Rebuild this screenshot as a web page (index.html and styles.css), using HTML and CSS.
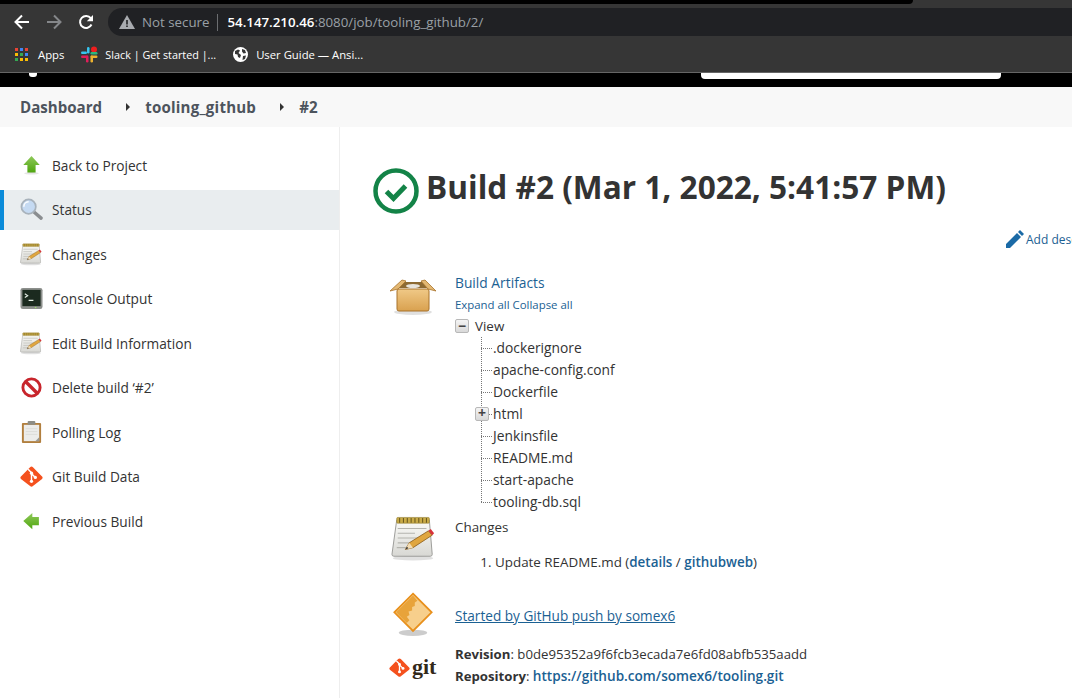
FILE: index.html
```html
<!DOCTYPE html>
<html lang="en">
<head>
    <meta charset="UTF-8">
    <meta name="viewport" content="width=device-width, initial-scale=1.0">
    <title>tooling_github #2 [Jenkins]</title>
    <link rel="stylesheet" href="styles.css">
</head>
<body>
    <svg class="sprites" width="0" height="0" aria-hidden="true">
        <defs>
            <linearGradient id="paper" x1="0" y1="0" x2="0" y2="1">
                <stop offset="0" stop-color="#fbfbf8"/>
                <stop offset="1" stop-color="#d8d8d4"/>
            </linearGradient>
            <linearGradient id="boxFront" x1="0" y1="0" x2="0" y2="1">
                <stop offset="0" stop-color="#f0c987"/>
                <stop offset="1" stop-color="#d9a14f"/>
            </linearGradient>
            <linearGradient id="greenArrow" x1="0" y1="0" x2="0" y2="1">
                <stop offset="0" stop-color="#8fc95a"/>
                <stop offset="1" stop-color="#4fa60f"/>
            </linearGradient>
            <symbol id="notepad" viewBox="0 0 48 48">
                <ellipse cx="23" cy="44" rx="21" ry="2.5" fill="#000" opacity=".12"/>
                <path d="M6 4h34l3 36q0 2-2 2H3q-2 0-2-2z" fill="url(#paper)" stroke="#9a9a96"/>
                <rect x="6" y="1.5" width="34" height="6" rx="1" fill="#c9ab47" stroke="#8f7a2e" stroke-width=".6"/>
                <path d="M9 2v5M13 2v5M17 2v5M21 2v5M25 2v5M29 2v5M33 2v5M37 2v5" stroke="#6b5a1e" stroke-width="1.1"/>
                <path d="M7 13h30M7 18h18M7 23h30M7 28h22M6 33h14" stroke="#b4b4ae" stroke-width="1.2"/>
                <path d="M15 35l4-7L39 15.500l4 4.500L23 33z" fill="#e0a63f" stroke="#85591a" stroke-width=".8"/>
                <path d="M39 15.500l4 4.500 2-2-3.500-4.500z" fill="#d8323a"/>
                <path d="M15 35l4-7 4 5z" fill="#f2dcb4"/>
                <path d="M15 35l1.600-3 1.600 1.700z" fill="#333"/>
            </symbol>
            <symbol id="gitMark" viewBox="0 0 24 24">
                <path d="M1 12L10.500 2.300q1.500-1.300 3 0l9.500 9.700q1.200 1.300 0 2.500l-9.500 7.500q-1.500 1.300-3 0L1 14.500q-1.200-1.300 0-2.500z" fill="#f4511e"/>
                <path d="M8.500 4.500l3.500 3.500M12 8v9M12 9l4 4" stroke="#fff" stroke-width="1.500" fill="none"/>
                <circle cx="12" cy="8.500" r="1.700" fill="#fff"/>
                <circle cx="12" cy="17" r="1.700" fill="#fff"/>
                <circle cx="16" cy="13" r="1.700" fill="#fff"/>
            </symbol>
        </defs>
    </svg>

    <div class="browser">
        <div class="tab-strip"><div class="tab-strip-dark"></div></div>
        <div class="toolbar">
            <svg class="nav-icon" width="16" height="16" viewBox="0 0 16 16"><path d="M15 8H2M8 1.500L1.500 8 8 14.500" fill="none" stroke="#fff" stroke-width="2"/></svg>
            <svg class="nav-icon" width="16" height="16" viewBox="0 0 16 16"><path d="M1 8h13M8 1.500L14.500 8 8 14.500" fill="none" stroke="#85878a" stroke-width="2"/></svg>
            <svg class="nav-icon" width="16" height="16" viewBox="0 0 16 16"><path d="M13.500 10.500A6 6 0 1 1 12.800 4.200" fill="none" stroke="#fff" stroke-width="2"/><path d="M15 1v6.200H8.800z" fill="#fff"/></svg>
            <div class="omnibox">
                <svg width="16" height="14" viewBox="0 0 16 14"><path d="M8 0l8 14H0z" fill="#a8abaf"/><path d="M7.200 5h1.600v4.500H7.200zM7.200 10.500h1.600V12H7.200z" fill="#202124"/></svg>
                <span class="not-secure">Not secure</span>
                <span class="url"><b>54.147.210.46</b>:8080/job/tooling_github/2/</span>
            </div>
        </div>
        <div class="bookmarks">
            <span class="bookmark bookmark-apps">
                <svg width="13" height="13" viewBox="0 0 13 13">
                    <path fill="#ea4335" d="M0 0h3v3H0z"/><path fill="#4285f4" d="M5 0h3v3H5z"/><path fill="#ea4335" d="M10 0h3v3h-3z"/>
                    <path fill="#fbbc05" d="M0 5h3v3H0z"/><path fill="#34a853" d="M5 5h3v3H5z"/><path fill="#4285f4" d="M10 5h3v3h-3z"/>
                    <path fill="#34a853" d="M0 10h3v3H0z"/><path fill="#fbbc05" d="M5 10h3v3H5z"/><path fill="#fbbc05" d="M10 10h3v3h-3z"/>
                </svg>
                Apps
            </span>
            <span class="bookmark bookmark-slack">
                <svg width="17" height="17" viewBox="0 0 17 17">
                    <rect x="6" y="1" width="2.500" height="6.500" rx="1.200" fill="#36c5f0"/>
                    <rect x="0" y="5.500" width="6" height="2.500" rx="1.200" fill="#36c5f0"/>
                    <circle cx="13" cy="3.500" r="3" fill="#f01e1e"/>
                    <rect x="9.500" y="6" width="7" height="2.500" rx="1.200" fill="#2eb67d"/>
                    <rect x="9.500" y="9.500" width="7" height="2.500" rx="1.200" fill="#ecb22e"/>
                    <rect x="9.500" y="9.500" width="2.500" height="7" rx="1.200" fill="#ecb22e"/>
                    <rect x="0" y="9.500" width="7" height="2.500" rx="1.200" fill="#e01e5a"/>
                    <rect x="5" y="9.500" width="2.500" height="7" rx="1.200" fill="#e01e5a"/>
                </svg>
                Slack | Get started |...
            </span>
            <span class="bookmark">
                <svg width="15" height="15" viewBox="0 0 15 15"><circle cx="7.500" cy="7.500" r="7.500" fill="#fff"/><path d="M2 4l3-1.500 2 1-1.500 2.500 2.500 2-1 3-2-1-.5-2.500L2 7zM9 2l3 1 1 3-2.500.5L9 4.500zM10 9l3-.5-1 3.500-2.500 1z" fill="#363636"/></svg>
                User Guide — Ansi...
            </span>
        </div>
    </div>

    <header class="top-bar">
        <span class="logo-stub"></span>
        <span class="search-box"></span>
    </header>

    <nav class="breadcrumbs">
        <a href="#">Dashboard</a>
        <span class="crumb-arrow"></span>
        <a class="crumb-job" href="#">tooling_github</a>
        <span class="crumb-arrow"></span>
        <a href="#">#2</a>
    </nav>

    <div class="page">
        <aside class="side-panel">
            <a class="task" href="#">
                <svg class="task-icon" viewBox="-2 -1 28 27"><path d="M12 1L22 12h-5v9H7v-9H2z" fill="url(#greenArrow)"/><ellipse cx="12" cy="22" rx="9" ry="1.500" fill="#000" opacity=".1"/></svg>
                Back to Project
            </a>
            <a class="task active" href="#">
                <svg class="task-icon" viewBox="0 0 24 24"><path d="M14 14l8 7" stroke="#8a8d90" stroke-width="3.500" stroke-linecap="round"/><circle cx="9" cy="9" r="7.500" fill="#c5daf2" stroke="#a8b2bb" stroke-width="1.800"/><path d="M4 9a5 5 0 0 1 5-5" stroke="#fff" stroke-width="1.500" fill="none"/></svg>
                Status
            </a>
            <a class="task" href="#"><svg class="task-icon"><use href="#notepad"/></svg>Changes</a>
            <a class="task" href="#">
                <svg class="task-icon" viewBox="0 0 24 24"><rect x=".5" y="1" width="23" height="22" rx="2.500" fill="#8c8f8c"/><rect x="2.500" y="3" width="19" height="17" fill="#1b2a1f"/><path d="M5 7l3 2-3 2M9 14h5" stroke="#e6efe6" stroke-width="1.200" fill="none"/><rect x="15.500" y="20.800" width="1.500" height="1.200" fill="#9fe06a"/></svg>
                Console Output
            </a>
            <a class="task" href="#"><svg class="task-icon"><use href="#notepad"/></svg>Edit Build Information</a>
            <a class="task" href="#">
                <svg class="task-icon" viewBox="0 0 24 24"><circle cx="12" cy="12" r="9" fill="#fff" stroke="#c8252c" stroke-width="3"/><path d="M6 6l12 12" stroke="#c8252c" stroke-width="3.500"/></svg>
                Delete build ‘#2’
            </a>
            <a class="task" href="#">
                <svg class="task-icon" viewBox="0 0 24 24"><rect x="2" y="2" width="20" height="21" rx="1" fill="#b17f3e"/><rect x="4" y="4" width="16" height="17" fill="#ececea"/><rect x="8" y="0" width="8" height="4" rx="1" fill="#8d8d86"/><path d="M6 8h12M6 11h12M6 14h12" stroke="#dcdcd8"/><path d="M20 17v4h-4z" fill="#9a9a95"/></svg>
                Polling Log
            </a>
            <a class="task" href="#"><svg class="task-icon"><use href="#gitMark"/></svg>Git Build Data</a>
            <a class="task" href="#">
                <svg class="task-icon" viewBox="-2 -1 28 27"><path d="M2 12L13 2v5h8v10h-8v5z" fill="url(#greenArrow)"/></svg>
                Previous Build
            </a>
        </aside>

        <main class="main-panel">
            <h1 class="build-title">
                <svg class="build-status" viewBox="0 0 46 46"><circle cx="23" cy="23" r="20.500" fill="none" stroke="#138347" stroke-width="4.500"/><path d="M13.500 23.500l7 7 12-12.500" fill="none" stroke="#138347" stroke-width="5"/></svg>
                <span class="build-name">Build #2 (Mar 1, 2022, 5:41:57 PM)</span>
            </h1>

            <a class="add-description" href="#">
                <svg width="18" height="18" viewBox="0 0 18 18"><path d="M0 18v-4L11 3l4 4L4 18zM12 2l2-2 4 4-2 2z" fill="#1a6aa6"/></svg>
                Add description
            </a>

            <section class="build-row artifacts-row">
                <svg class="row-icon box-icon" viewBox="0 0 48 36">
                    <ellipse cx="24" cy="33" rx="19" ry="3" fill="#000" opacity=".12"/>
                    <path d="M9 9l6-6h18l6 6z" fill="#8d6a33"/>
                    <ellipse cx="24" cy="7" rx="7" ry="2" fill="#e8e4dc"/>
                    <path d="M1 12L13 1l4 1-8 8zM47 12L36 1l-4 1 7 8z" fill="#e3b873" stroke="#a8722a" stroke-width=".8"/>
                    <rect x="8" y="10" width="32" height="22" rx="2" fill="url(#boxFront)" stroke="#a8722a"/>
                </svg>
                <div class="row-body">
                    <a class="artifacts-title" href="#">Build Artifacts</a>
                    <div class="artifacts-controls"><a href="#">Expand all</a> <a href="#">Collapse all</a></div>
                    <div class="tree-root"><span class="tree-toggle">&minus;</span><span class="tree-root-label">View</span></div>
                    <ul class="tree">
                        <li><a href="#">.dockerignore</a></li>
                        <li><a href="#">apache-config.conf</a></li>
                        <li><a href="#">Dockerfile</a></li>
                        <li class="tree-folder"><span class="tree-toggle">+</span><span>html</span></li>
                        <li><a href="#">Jenkinsfile</a></li>
                        <li><a href="#">README.md</a></li>
                        <li><a href="#">start-apache</a></li>
                        <li><a href="#">tooling-db.sql</a></li>
                    </ul>
                </div>
            </section>

            <section class="build-row changes-row">
                <svg class="row-icon notepad-icon"><use href="#notepad"/></svg>
                <div class="row-body">
                    <div>Changes</div>
                    <ol class="change-list">
                        <li>Update README.md (<a href="#">details</a> / <a href="#">githubweb</a>)</li>
                    </ol>
                </div>
            </section>

            <section class="build-row cause-row">
                <svg class="row-icon" viewBox="-3 -2 54 54">
                    <ellipse cx="24" cy="45" rx="16" ry="3.500" fill="#000" opacity=".2"/>
                    <path d="M24 1L45 22 24 43 3 22z" fill="#f7cf8c" stroke="#e8901c" stroke-width="2"/>
                    <path d="M24 3L5 22l12 12 3-3-3-4 3-2-1-4 4-1 0-4 3-1 0-4 3-2z" fill="#e8a33a"/>
                </svg>
                <div class="row-body"><a class="cause-link" href="#">Started by GitHub push by somex6</a></div>
            </section>

            <section class="build-row git-row">
                <div class="git-logo">
                    <svg width="21" height="21"><use href="#gitMark"/></svg>
                    <span class="git-word">git</span>
                </div>
                <div class="row-body">
                    <div class="git-line"><b>Revision</b>: b0de95352a9f6fcb3ecada7e6fd08abfb535aadd</div>
                    <div class="git-line"><b>Repository</b>: <a href="#">https://github.com/somex6/tooling.git</a></div>
                </div>
            </section>
        </main>
    </div>
</body>
</html>
```

FILE: styles.css
```css
* {
    margin: 0;
    padding: 0;
    box-sizing: border-box;
}

html, body {
    height: 698px;
    overflow: hidden;
}

body {
    font-family: 'Open Sans', 'Noto Sans', sans-serif;
    font-size: 13.4px;
    color: #333;
    background: #fff;
}

a {
    color: #1b6193;
    text-decoration: none;
}

.sprites {
    display: block;
    height: 0;
}

/* browser chrome */
.browser {
    background: #363636;
    border-bottom: 1px solid #666;
    height: 73px;
}

.tab-strip {
    height: 8px;
}

.tab-strip-dark {
    width: 913px;
    height: 4px;
    background: #000;
    border-bottom-right-radius: 4px;
}

.toolbar {
    display: flex;
    align-items: center;
    height: 28px;
    padding-left: 14px;
}

.nav-icon {
    margin-right: 16px;
}

.omnibox {
    flex: 1;
    display: flex;
    align-items: center;
    height: 28px;
    margin-left: -2px;
    padding-left: 11px;
    background: #202124;
    border-radius: 14px 0 0 14px;
    font-size: 13.3px;
}

.not-secure {
    margin-left: 7px;
    padding-right: 8px;
    border-right: 1px solid #6b6d70;
    line-height: 17px;
    color: #9aa0a6;
}

.url {
    margin-left: 9px;
    color: #9aa0a6;
}

.url b {
    font-weight: 600;
    color: #fff;
}

.bookmarks {
    display: flex;
    align-items: center;
    gap: 17px;
    height: 36px;
    padding-left: 15px;
    font-size: 11.3px;
    color: #fff;
}

.bookmark {
    display: flex;
    align-items: center;
    gap: 8px;
}

.bookmark-apps {
    gap: 10px;
}

.bookmark-slack {
    gap: 7px;
    font-size: 10.8px;
}

/* jenkins header */
.top-bar {
    display: flex;
    justify-content: space-between;
    align-items: flex-start;
    height: 14px;
    padding: 0 71px 0 29px;
    background: #000;
}

.logo-stub {
    width: 8px;
    height: 4px;
    background: #fff;
    border-radius: 0 0 3px 3px;
}

.search-box {
    width: 300px;
    height: 6px;
    background: #fff;
    border-radius: 0 0 4px 4px;
}

.breadcrumbs {
    display: flex;
    align-items: center;
    height: 40px;
    padding-left: 20px;
    background: #f8f8f8;
    font-size: 15.1px;
    font-weight: 700;
}

.breadcrumbs a {
    color: #4d545d;
}

.breadcrumbs .crumb-job {
    letter-spacing: .2px;
}

.crumb-arrow {
    width: 0;
    height: 0;
    margin: 0 15px 0 24px;
    border-left: 4px solid #333;
    border-top: 4px solid transparent;
    border-bottom: 4px solid transparent;
}

/* page layout */
.page {
    display: flex;
    height: 571px;
}

.side-panel {
    flex: 0 0 340px;
    padding-top: 18.3px;
    border-right: 1px solid #eee;
}

.task {
    display: flex;
    align-items: center;
    gap: 9px;
    height: 40px;
    margin-bottom: 4.5px;
    padding-left: 20px;
    font-size: 13.7px;
    color: #333;
}

.task.active {
    padding-left: 16px;
    background: #e9edef;
    border-left: 4px solid #0b8bd9;
}

.task-icon {
    flex: 0 0 23px;
    width: 23px;
    height: 23px;
}

.main-panel {
    flex: 1;
    min-width: 0;
    overflow: hidden;
    padding: 41px 0 0 33px;
}

.build-title {
    display: flex;
    align-items: center;
    gap: 8px;
    height: 46px;
    font-size: 31.6px;
    font-weight: 700;
    white-space: nowrap;
}

.build-name {
    margin-bottom: 10px;
    margin-left: -1px;
}

.build-status {
    flex: 0 0 46px;
    width: 46px;
    height: 46px;
}

.add-description {
    display: flex;
    align-items: center;
    gap: 2px;
    height: 18px;
    margin: 16px 0 0 633px;
    font-size: 12px;
    white-space: nowrap;
}

.add-description svg {
    flex: none;
}

/* build rows */
.build-row {
    display: flex;
    gap: 18px;
    padding-left: 16px;
}

.row-icon {
    flex: 0 0 48px;
    width: 48px;
    height: 48px;
}

.box-icon {
    height: 36px;
    margin-top: 7px;
}

.notepad-icon {
    flex-basis: 46px;
    width: 46px;
    height: 46px;
    margin: -2px 0 0 2px;
}

.artifacts-row {
    margin-top: 24px;
}

.artifacts-title {
    display: block;
    height: 22px;
    line-height: 22px;
    font-size: 13.8px;
}

.artifacts-controls {
    height: 22px;
    line-height: 22px;
    font-size: 11.4px;
}

.tree-root {
    display: flex;
    align-items: center;
    height: 22px;
    margin-top: -1px;
    gap: 6px;
}

.tree-toggle {
    flex: 0 0 14px;
    width: 14px;
    height: 14px;
    line-height: 11px;
    text-align: center;
    font-size: 14px;
    font-weight: 700;
    color: #444;
    background: linear-gradient(#f4f4f4, #d9d9d9);
    border: 1px solid #b8b8b8;
    border-radius: 2px;
}

.tree {
    list-style: none;
    margin-left: 26px;
    padding-left: 12px;
    position: relative;
    font-size: 13.8px;
}

/* dotted line down the tree, stops at the middle of the last row */
.tree::before {
    content: "";
    position: absolute;
    left: 0;
    top: 0;
    bottom: 11px;
    border-left: 1px dotted #777;
}

.tree li {
    position: relative;
    height: 22px;
    line-height: 22px;
}

.tree li::before {
    content: "";
    position: absolute;
    left: -12px;
    top: 11px;
    width: 11px;
    border-top: 1px dotted #777;
}

.tree a {
    color: #333;
    font-weight: 500;
}

.tree-folder .tree-toggle {
    position: absolute;
    left: -18px;
    top: 4px;
    line-height: 10px;
    z-index: 1;
}

.changes-row {
    margin-top: 5px;
}

.change-list {
    margin: 15px 0 0 40px;
    line-height: 22px;
}

.change-list a {
    font-weight: 600;
}

.cause-row {
    margin-top: 18px;
    align-items: center;
}

.cause-link {
    text-decoration: underline;
    font-size: 13.6px;
    font-weight: 500;
}

.git-row {
    margin-top: 5px;
}

.git-logo {
    flex: 0 0 48px;
    width: 48px;
    display: flex;
    align-items: center;
    gap: 2px;
    height: 42px;
    margin-top: 2px;
}

.git-logo svg {
    flex: none;
}

.git-word {
    font-family: 'Liberation Serif', serif;
    font-size: 22px;
    font-weight: 700;
    line-height: 22px;
    color: #33291a;
}

.git-line {
    height: 21px;
    line-height: 21px;
    font-size: 13.2px;
    white-space: nowrap;
}

.git-line a {
    font-size: 13.6px;
    font-weight: 600;
}

.git-line b {
    font-weight: 700;
}
```
